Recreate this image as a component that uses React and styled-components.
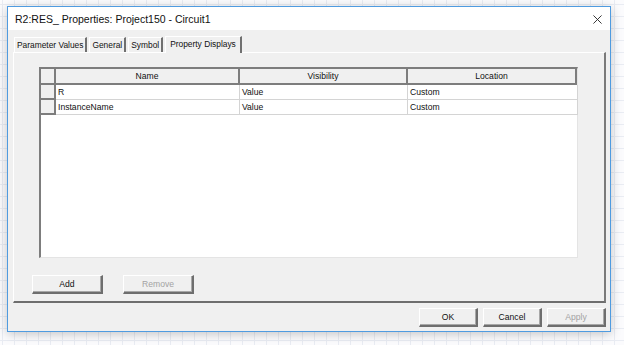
import styled, { createGlobalStyle } from "styled-components";

const GlobalStyle = createGlobalStyle`
  html, body {
    margin: 0;
    padding: 0;
    width: 624px;
    height: 345px;
    overflow: hidden;
    background-color: #fbfbfd;
    background-image:
      linear-gradient(to right, #e9ecf3 1px, transparent 1px),
      linear-gradient(to bottom, #e9ecf3 1px, transparent 1px);
    background-size: 12px 12px;
    background-position: 2px 4px;
    font-family: "Liberation Sans", Arial, sans-serif;
  }
`;

const rows = [
  { name: "R", visibility: "Value", location: "Custom" },
  { name: "InstanceName", visibility: "Value", location: "Custom" },
];

const tabs = ["Parameter Values", "General", "Symbol", "Property Displays"];

function App() {
  return (
    <Page>
      <GlobalStyle />
      <Window>
        <TitleBar>
          <Title>R2:RES_ Properties: Project150 - Circuit1</Title>
          <CloseIcon viewBox="0 0 10 10">
            <path d="M0.5 0.5 L9.5 9.5 M9.5 0.5 L0.5 9.5" stroke="#222" strokeWidth="1" />
          </CloseIcon>
        </TitleBar>
        <Body>
          <TabStrip>
            {tabs.map((t) => (
              <Tab key={t} $active={t === "Property Displays"}>
                {t}
              </Tab>
            ))}
          </TabStrip>
          <Panel>
            <Grid>
              <Corner />
              <HeadCell>Name</HeadCell>
              <HeadCell>Visibility</HeadCell>
              <HeadCell>Location</HeadCell>
              {rows.map((r) => (
                <Row key={r.name}>
                  <RowHead />
                  <Cell>{r.name}</Cell>
                  <Cell>{r.visibility}</Cell>
                  <Cell>{r.location}</Cell>
                </Row>
              ))}
            </Grid>
            <PanelButtons>
              <Button>Add</Button>
              <Button $disabled>Remove</Button>
            </PanelButtons>
          </Panel>
          <Footer>
            <Button $small>OK</Button>
            <Button $small>Cancel</Button>
            <Button $small $disabled>Apply</Button>
          </Footer>
        </Body>
      </Window>
    </Page>
  );
}

export default App;

const Page = styled.div`
  padding: 6px 0 0 7px;
`;

const Window = styled.div`
  width: 604px;
  height: 326px;
  box-sizing: border-box;
  border: 1px solid #4f9be0;
  display: flex;
  flex-direction: column;
  background: #f0f0f0;
  box-shadow: 0 2px 10px rgba(0, 0, 0, 0.22);
`;

const TitleBar = styled.div`
  height: 23px;
  background: #fff;
  display: flex;
  align-items: center;
  justify-content: space-between;
  padding: 0 8px 0 7px;
  flex-shrink: 0;
`;

const Title = styled.div`
  font-size: 10.5px;
  color: #111;
`;

const CloseIcon = styled.svg`
  width: 9px;
  height: 9px;
  margin-top: 1px;
`;

const Body = styled.div`
  flex: 1;
  display: flex;
  flex-direction: column;
  padding: 5px 4px 0 5px;
`;

const TabStrip = styled.div`
  display: flex;
  align-items: flex-end;
  height: 17px;
  padding-left: 1px;
`;

const Tab = styled.div`
  font-size: 8.4px;
  color: #111;
  height: ${(p) => (p.$active ? "17px" : "15px")};
  line-height: ${(p) => (p.$active ? "14px" : "15px")};
  padding: 0 ${(p) => (p.$active ? "4px" : "2px")};
  margin-right: 2px;
  box-sizing: border-box;
  border-top: 1px solid #fff;
  border-left: 1px solid #fff;
  border-right: 2px solid #707070;
  background: #f0f0f0;
  position: relative;
  z-index: ${(p) => (p.$active ? 1 : 0)};
  margin-bottom: ${(p) => (p.$active ? "-1px" : "0")};
`;

const Panel = styled.div`
  height: 251px;
  box-sizing: border-box;
  border-top: 1px solid #fff;
  border-left: 1px solid #fff;
  border-right: 2px solid #7a7a7a;
  border-bottom: 2px solid #6e6e6e;
  display: flex;
  flex-direction: column;
  padding: 14px 26px 0 25px;
`;

const Grid = styled.div`
  height: 191px;
  box-sizing: border-box;
  background: #fff;
  border-top: 2px solid #7d7d7d;
  border-left: 2px solid #7d7d7d;
  border-right: 1px solid #e4e4e4;
  border-bottom: 1px solid #e4e4e4;
  display: grid;
  grid-template-columns: 15px 184px 168px 170px 1fr;
  grid-auto-rows: 15px;
  grid-template-rows: 16px;
  align-content: start;
  font-size: 8.6px;
  color: #111;
`;

const Corner = styled.div`
  background: #f0f0f0;
  border-right: 2px solid #7d7d7d;
  border-bottom: 2px solid #7d7d7d;
`;

const HeadCell = styled.div`
  background: #f0f0f0;
  border-right: 2px solid #7d7d7d;
  border-bottom: 2px solid #7d7d7d;
  text-align: center;
  line-height: 15px;
  &:nth-child(4) {
    grid-column: 4 / 6;
    margin-right: 1px;
  }
`;

const Row = styled.div`
  display: contents;
`;

const RowHead = styled.div`
  background: #f0f0f0;
  border-right: 2px solid #7d7d7d;
  border-bottom: 2px solid #7d7d7d;
  grid-column: 1;
`;

const Cell = styled.div`
  border-right: 1px solid #d4d4d4;
  border-bottom: 1px solid #d4d4d4;
  padding-left: 2px;
  line-height: 14px;
  white-space: nowrap;
`;

const PanelButtons = styled.div`
  display: flex;
  gap: 20px;
  margin-top: 17px;
  margin-left: -7px;
`;

const Button = styled.div`
  width: ${(p) => (p.$small ? "59px" : "71px")};
  height: 19px;
  box-sizing: border-box;
  background: #f0f0f0;
  border-top: 1px solid #fff;
  border-left: 1px solid #fff;
  border-right: 2px solid #6e6e6e;
  border-bottom: 2px solid #6e6e6e;
  box-shadow: inset -1px -1px 0 #a8a8a8;
  display: flex;
  align-items: center;
  justify-content: center;
  font-size: 8.6px;
  color: ${(p) => (p.$disabled ? "#a3a3a3" : "#111")};
`;

const Footer = styled.div`
  display: flex;
  justify-content: flex-end;
  gap: 5px;
  padding-top: 5px;
`;
